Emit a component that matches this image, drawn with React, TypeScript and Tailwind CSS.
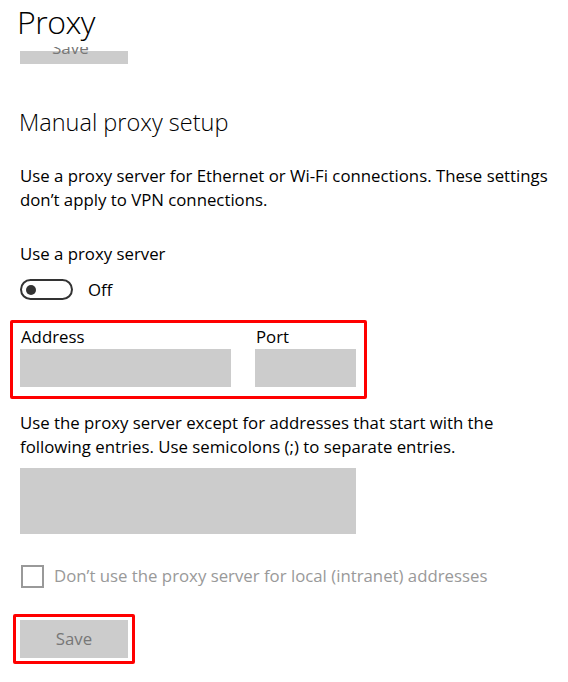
import React from 'react';

export default function App() {
  return (
    <div className="w-[568px] h-[682px] bg-white text-black overflow-hidden font-['Open_Sans','Noto_Sans',sans-serif]">
      {/* header */}
      <div className="pl-[17px] pt-[2px] h-[47px]">
        <h1 className="text-[32px] font-light leading-[40px] tracking-[-0.5px]">Proxy</h1>
      </div>

      {/* clipped save button scrolled under the header */}
      <div className="relative ml-[20px] h-[17px] w-[108px] overflow-hidden">
        <div className="absolute left-0 right-0 top-[4px] h-[13px] bg-[#cccccc]" />
        <span className="absolute left-[32px] top-[-9px] text-[17px] leading-[20px] text-[#777]">Save</span>
      </div>

      <div className="px-[20px]">
        <h2 className="mt-[43px] text-[23.5px] font-light leading-[30px] -ml-[1px]">Manual proxy setup</h2>

        <p className="mt-[27px] text-[16.8px] leading-[24px] w-[545px]">
          Use a proxy server for Ethernet or Wi-Fi connections. These settings don’t apply to VPN connections.
        </p>

        <p className="mt-[30px] text-[16.8px] leading-[24px]">Use a proxy server</p>

        <div className="mt-[13px] flex items-center gap-[15px]">
          <div className="w-[53px] h-[21px] rounded-full border-2 border-[#333] flex items-center pl-[4px]">
            <div className="w-[10px] h-[10px] rounded-full bg-[#333]" />
          </div>
          <span className="text-[16.8px] leading-[20px]">Off</span>
        </div>

        {/* address + port, outlined in red */}
        <div className="mt-[20px] -ml-[10px] w-[357px] h-[79px] border-[3px] border-[#ff0000] rounded-[2px] pl-[7px] pt-[3px]">
          <div className="flex gap-[24px]">
            <div className="flex flex-col">
              <span className="text-[16.8px] leading-[21px] pl-[1px]">Address</span>
              <div className="mt-[2px] w-[211px] h-[38px] bg-[#cccccc]" />
            </div>
            <div className="flex flex-col">
              <span className="text-[16.8px] leading-[21px] pl-[1px]">Port</span>
              <div className="mt-[2px] w-[101px] h-[38px] bg-[#cccccc]" />
            </div>
          </div>
        </div>

        <p className="mt-[12px] text-[16.8px] leading-[24px] w-[505px]">
          Use the proxy server except for addresses that start with the following entries. Use semicolons (;) to separate entries.
        </p>

        <div className="mt-[9px] w-[336px] h-[66px] bg-[#cccccc]" />

        <div className="mt-[30px] flex items-center gap-[10px] pl-[1px]">
          <div className="w-[23px] h-[23px] border-2 border-[#999]" />
          <span className="text-[16.8px] leading-[24px] text-[#999]">Don’t use the proxy server for local (intranet) addresses</span>
        </div>

        <div className="mt-[26px] -ml-[7px] w-[122px] h-[50px] border-[3px] border-[#ff0000] rounded-[2px] pl-[4px] pt-[3px]">
          <div className="w-[108px] h-[38px] bg-[#cccccc] flex items-center justify-center text-[16.8px] text-[#777]">Save</div>
        </div>
      </div>
    </div>
  );
}
